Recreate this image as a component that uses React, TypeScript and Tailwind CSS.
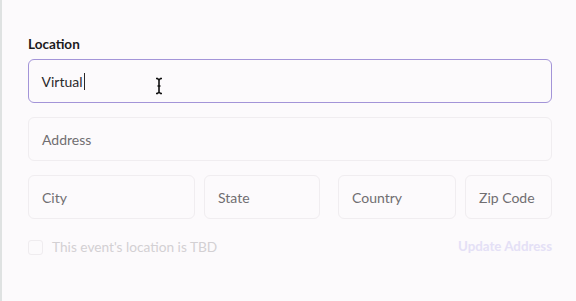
import React from "react";

const font = { fontFamily: "Lato, 'Open Sans', sans-serif" };

function Field({ placeholder, className }: { placeholder: string; className: string }) {
  return (
    <div
      className={`h-[44px] rounded-[6px] border border-[#f0edf0] bg-[#fcfafc] flex items-center px-[13px] text-[14px] text-[#706e71] ${className}`}
    >
      {placeholder}
    </div>
  );
}

export default function App() {
  return (
    <div
      style={font}
      className="relative h-[301px] w-[576px] overflow-hidden border-l-2 border-[#dfe2e2] bg-[#fcfafc] pl-[26px] pr-[24px] pt-[36px]"
    >
      <div className="text-[13.5px] leading-[16px] font-bold text-[#1c1b1d]">Location</div>

      <div className="mt-[7px] flex h-[44px] items-center rounded-[6px] border-[1.5px] border-[#a394d8] px-[12.5px] text-[14px] text-[#2a292b]">
        <span>Virtual</span>
        <span className="ml-[1px] inline-block h-[17px] w-[1.5px] bg-[#2a292b]" />
      </div>

      <Field placeholder="Address" className="mt-[14px] w-full" />

      <div className="mt-[14px] flex">
        <Field placeholder="City" className="w-[167px]" />
        <Field placeholder="State" className="ml-[9px] w-[116px]" />
        <Field placeholder="Country" className="ml-[18px] w-[118px]" />
        <Field placeholder="Zip Code" className="ml-[9px] w-[87px]" />
      </div>

      <div className="mt-[20px] flex h-[16px] items-center justify-between">
        <label className="flex items-center gap-[9px] text-[13.7px] text-[#d3d0d3]">
          <span className="inline-block h-[15px] w-[15px] rounded-[3px] border border-[#efecef] bg-[#fcfafc]" />
          This event's location is TBD
        </label>
        <span className="text-[13.3px] font-bold text-[#e4e0f6]">Update Address</span>
      </div>

      <svg
        className="absolute left-[152px] top-[77px]"
        width="10"
        height="18"
        viewBox="0 0 10 18"
        fill="none"
      >
        <path
          d="M2 1.5h1.5L5 3l1.5-1.5H8M5 3v12M2 16.5h1.5L5 15l1.5 1.5H8M3.5 9h3"
          stroke="#111"
          strokeWidth="1.6"
        />
      </svg>
    </div>
  );
}
